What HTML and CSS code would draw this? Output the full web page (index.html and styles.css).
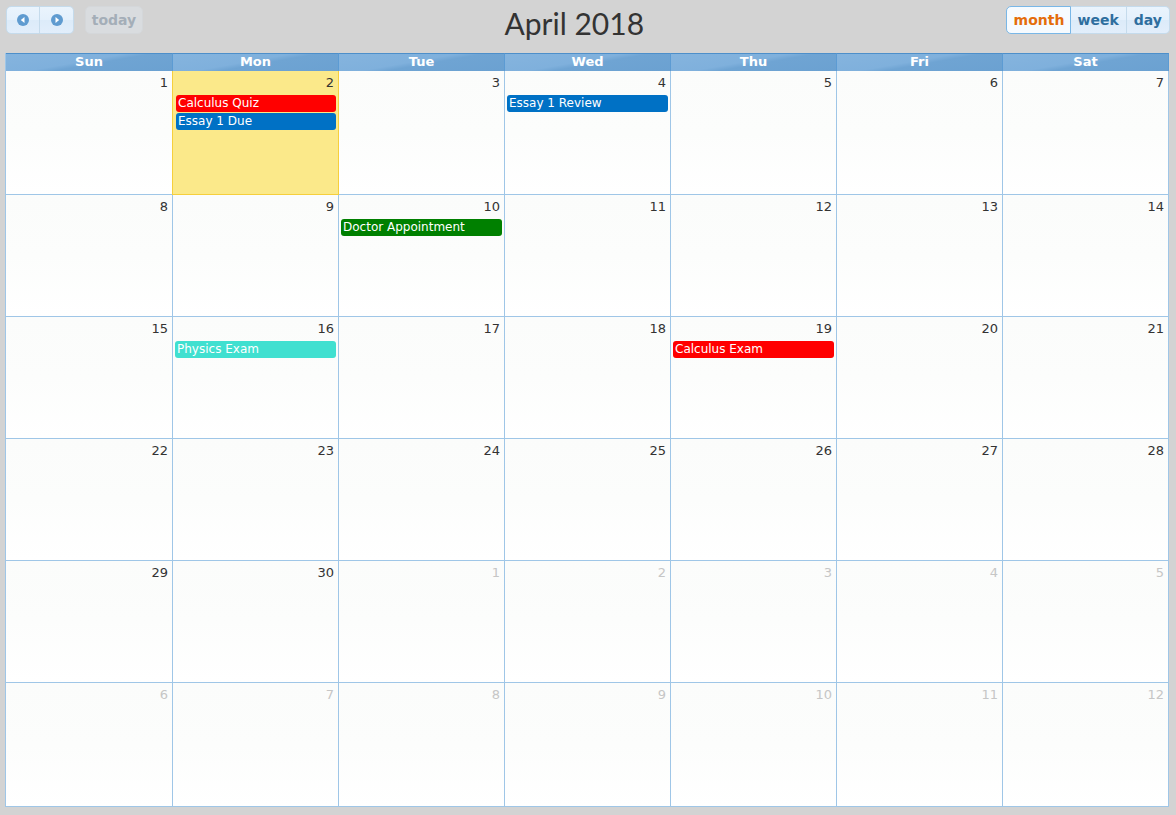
FILE: index.html
```html
<!DOCTYPE html>
<html>
<head>
<meta charset="utf-8">
<link rel="stylesheet" href="styles.css">
</head>
<body>
<div class="cal">
  <div class="toolbar">
    <div class="left">
      <div class="btn-group">
        <button class="btn icon-btn first"><svg width="12" height="12" viewBox="0 0 12 12"><circle cx="6" cy="6" r="6" fill="#5f9bd0"/><path d="M7.5 3 L3.8 6 L7.5 9 Z" fill="#fff"/></svg></button>
        <button class="btn icon-btn last"><svg width="12" height="12" viewBox="0 0 12 12"><circle cx="6" cy="6" r="6" fill="#5f9bd0"/><path d="M4.5 3 L8.2 6 L4.5 9 Z" fill="#fff"/></svg></button>
      </div>
      <button class="btn today">today</button>
    </div>
    <h2 class="title">April 2018</h2>
    <div class="right">
      <div class="btn-group">
        <button class="btn view active first">month</button>
        <button class="btn view">week</button>
        <button class="btn view last">day</button>
      </div>
    </div>
  </div>

  <div class="grid">
    <div class="head">Sun</div><div class="head">Mon</div><div class="head">Tue</div><div class="head">Wed</div><div class="head">Thu</div><div class="head">Fri</div><div class="head">Sat</div>

    <div class="day"><span class="num">1</span></div>
    <div class="day today-cell"><span class="num">2</span><div class="ev red">Calculus Quiz</div><div class="ev blue">Essay 1 Due</div></div>
    <div class="day"><span class="num">3</span></div>
    <div class="day"><span class="num">4</span><div class="ev blue">Essay 1 Review</div></div>
    <div class="day"><span class="num">5</span></div>
    <div class="day"><span class="num">6</span></div>
    <div class="day"><span class="num">7</span></div>

    <div class="day"><span class="num">8</span></div>
    <div class="day"><span class="num">9</span></div>
    <div class="day"><span class="num">10</span><div class="ev green">Doctor Appointment</div></div>
    <div class="day"><span class="num">11</span></div>
    <div class="day"><span class="num">12</span></div>
    <div class="day"><span class="num">13</span></div>
    <div class="day"><span class="num">14</span></div>

    <div class="day"><span class="num">15</span></div>
    <div class="day"><span class="num">16</span><div class="ev teal">Physics Exam</div></div>
    <div class="day"><span class="num">17</span></div>
    <div class="day"><span class="num">18</span></div>
    <div class="day"><span class="num">19</span><div class="ev red">Calculus Exam</div></div>
    <div class="day"><span class="num">20</span></div>
    <div class="day"><span class="num">21</span></div>

    <div class="day"><span class="num">22</span></div>
    <div class="day"><span class="num">23</span></div>
    <div class="day"><span class="num">24</span></div>
    <div class="day"><span class="num">25</span></div>
    <div class="day"><span class="num">26</span></div>
    <div class="day"><span class="num">27</span></div>
    <div class="day"><span class="num">28</span></div>

    <div class="day"><span class="num">29</span></div>
    <div class="day"><span class="num">30</span></div>
    <div class="day other"><span class="num">1</span></div>
    <div class="day other"><span class="num">2</span></div>
    <div class="day other"><span class="num">3</span></div>
    <div class="day other"><span class="num">4</span></div>
    <div class="day other"><span class="num">5</span></div>

    <div class="day other"><span class="num">6</span></div>
    <div class="day other"><span class="num">7</span></div>
    <div class="day other"><span class="num">8</span></div>
    <div class="day other"><span class="num">9</span></div>
    <div class="day other"><span class="num">10</span></div>
    <div class="day other"><span class="num">11</span></div>
    <div class="day other"><span class="num">12</span></div>
  </div>
</div>
</body>
</html>
```
FILE: styles.css
```css
html, body {
  margin: 0;
  padding: 0;
  background: #d3d3d3;
}
body {
  font-family: "DejaVu Sans", Verdana, sans-serif;
  color: #333;
}
.cal {
  width: 1165px;
  margin: 0 6px 0 5px;
  padding-top: 6px;
}
.toolbar {
  display: flex;
  align-items: flex-start;
  height: 47px;
}
.left, .right {
  display: flex;
  gap: 11px;
  flex: none;
}
.btn-group {
  display: flex;
}
.btn {
  height: 28px;
  margin: 0;
  padding: 0 8px;
  border: 1px solid #c5dbec;
  background: linear-gradient(#eaf4fd 0%, #e4f0fc 50%, #dcebf9 51%, #e2eefb 100%);
  font-family: "DejaVu Sans", Verdana, sans-serif;
  font-weight: bold;
  font-size: 14px;
  color: #2e6e9e;
  cursor: pointer;
}
.btn-group .btn + .btn {
  border-left: none;
}
.btn.first {
  border-radius: 5px 0 0 5px;
}
.btn.last {
  border-radius: 0 5px 5px 0;
}
.icon-btn {
  width: 34px;
  display: flex;
  align-items: center;
  justify-content: center;
  padding: 0;
}
.icon-btn.first {
  margin-left: 1px;
}
.today {
  border-radius: 5px;
  background: #d9dcdf;
  border-color: #d4d7da;
  color: #a4aeb8;
  width: 58px;
  padding: 0;
}
.view.active {
  background: #f6fbff;
  border-color: #79b7e7;
  color: #e46d0a;
  width: 65px;
}
.view {
  padding: 0 7px;
}
.title {
  flex: 1;
  text-align: center;
  margin: 0;
  font-family: Lato, "Open Sans", sans-serif;
  font-weight: normal;
  font-size: 30px;
  color: #333;
  line-height: 34px;
}
.grid {
  display: grid;
  grid-template-columns: 167px 166px 166px 166px 166px 166px 166px;
  grid-template-rows: 18px 124px repeat(4, 122px) 124px;
  border-left: 1px solid #9fc6e7;
}
.head {
  background: linear-gradient(170deg, #85b4de 0%, #7fb0dc 45%, #6fa4d3 55%, #6ba1d1 100%);
  border-top: 1px solid #4d8fca;
  border-right: 1px solid #5c9bd3;
  border-bottom: 1px solid #4d8fca;
  color: #fff;
  font-weight: bold;
  font-size: 13px;
  text-align: center;
  line-height: 16px;
  box-sizing: border-box;
  height: 19px;
}
.day {
  border-right: 1px solid #9fc6e7;
  border-bottom: 1px solid #9fc6e7;
  background: linear-gradient(#fbfcfb 0%, #fcfdfc 50%, #ffffff 100%);
  display: flex;
  flex-direction: column;
  padding: 4px 2px 0 2px;
  box-sizing: border-box;
  min-width: 0;
}
.today-cell {
  background: #fbe98a;
  border-left: 1px solid #f6cf3c;
  border-right: 1px solid #f6cf3c;
  border-bottom: 1px solid #f6cf3c;
  margin-left: -1px;
  padding-left: 3px;
}
.num {
  align-self: flex-end;
  font-size: 13px;
  line-height: 15px;
  padding-right: 2px;
  margin-bottom: 5px;
  color: #333;
}
.other .num {
  color: #c6c6c6;
}
.ev {
  height: 17px;
  margin-bottom: 1px;
  border-radius: 3px;
  color: #fff;
  font-size: 12px;
  line-height: 16px;
  padding-left: 2px;
  white-space: nowrap;
  overflow: hidden;
}
.red { background: #ff0000; }
.blue { background: #0071c5; }
.green { background: #008000; }
.teal { background: #40e0d0; }
```
